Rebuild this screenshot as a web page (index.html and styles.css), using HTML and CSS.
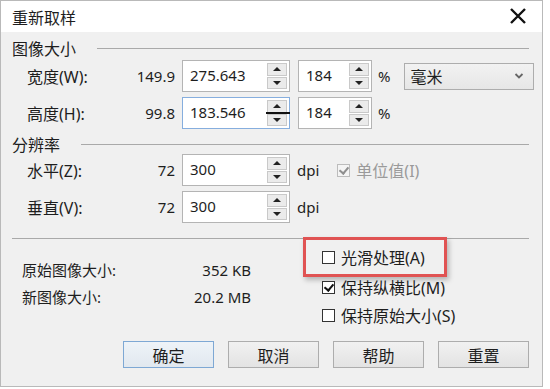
FILE: index.html
```html
<!DOCTYPE html>
<html lang="zh-CN">
<head>
    <meta charset="UTF-8">
    <title>重新取样</title>
    <link rel="stylesheet" href="styles.css">
</head>
<body>
    <div class="dialog">
        <div class="titlebar">
            <span class="title">重新取样</span>
            <svg class="close" width="20" height="20" viewBox="0 0 20 20">
                <path d="M3 3 L17 17 M17 3 L3 17" stroke="#111" stroke-width="2.4" fill="none"/>
            </svg>
        </div>

        <div class="content">
            <div class="group-head"><span>图像大小</span><i class="rule"></i></div>

            <div class="row">
                <span class="label">宽度(W):</span>
                <span class="orig">149.9</span>
                <div class="field wide">
                    <span class="val">275.643</span>
                    <span class="spin"><b class="up"></b><b class="down"></b></span>
                </div>
                <div class="field pct">
                    <span class="val">184</span>
                    <span class="spin"><b class="up"></b><b class="down"></b></span>
                </div>
                <span class="unit">%</span>
                <div class="select">
                    <span>毫米</span>
                    <svg width="10" height="8" viewBox="0 0 10 8"><path d="M1.5 2 L5 5.5 L8.5 2" stroke="#666" stroke-width="1.8" fill="none"/></svg>
                </div>
            </div>

            <div class="row">
                <span class="label">高度(H):</span>
                <span class="orig">99.8</span>
                <div class="field wide focused">
                    <span class="val">183.546</span>
                    <span class="spin"><b class="up"></b><b class="down"></b></span>
                    <i class="cursor-bar"></i>
                </div>
                <div class="field pct">
                    <span class="val">184</span>
                    <span class="spin"><b class="up"></b><b class="down"></b></span>
                </div>
                <span class="unit">%</span>
            </div>

            <div class="group-head second"><span>分辨率</span><i class="rule"></i></div>

            <div class="row">
                <span class="label">水平(Z):</span>
                <span class="orig">72</span>
                <div class="field wide">
                    <span class="val">300</span>
                    <span class="spin"><b class="up"></b><b class="down"></b></span>
                </div>
                <span class="dpi">dpi</span>
                <label class="check disabled">
                    <span class="box checked"></span>单位值(I)
                </label>
            </div>

            <div class="row">
                <span class="label">垂直(V):</span>
                <span class="orig">72</span>
                <div class="field wide">
                    <span class="val">300</span>
                    <span class="spin"><b class="up"></b><b class="down"></b></span>
                </div>
                <span class="dpi">dpi</span>
            </div>

            <div class="separator"></div>

            <div class="lower">
                <div class="info">
                    <div class="info-row"><span>原始图像大小:</span><span>352 KB</span></div>
                    <div class="info-row"><span>新图像大小:</span><span>20.2 MB</span></div>
                </div>
                <div class="checks">
                    <div class="highlight">
                        <label class="check"><span class="box"></span>光滑处理(A)</label>
                    </div>
                    <label class="check item"><span class="box checked"></span>保持纵横比(M)</label>
                    <label class="check item"><span class="box"></span>保持原始大小(S)</label>
                </div>
            </div>

            <div class="buttons">
                <button class="default">确定</button>
                <button>取消</button>
                <button>帮助</button>
                <button>重置</button>
            </div>
        </div>
    </div>
</body>
</html>
```

FILE: styles.css
```css
body {
    margin: 0;
    background-color: #ffffff;
    font-family: "Noto Sans", "Noto Sans CJK SC", sans-serif;
    font-size: 15px;
    color: #1e1e1e;
}
.dialog {
    width: 543px;
    height: 387px;
    box-sizing: border-box;
    border: 1px solid #b9b9b9;
    display: flex;
    flex-direction: column;
}
.titlebar {
    height: 31px;
    background-color: #ffffff;
    display: flex;
    align-items: center;
    justify-content: space-between;
    padding: 0 14px 0 11px;
}
.title {
    font-size: 16px;
}
.close {
    margin-top: -2px;
}
.content {
    flex: 1;
    background-color: #f0f0f0;
    padding: 0 13px 0 11px;
}
.group-head {
    display: flex;
    align-items: center;
    height: 20px;
    margin-top: 6px;
    margin-bottom: 2px;
    font-size: 16px;
}
.group-head.second {
    margin-top: 5px;
    margin-bottom: 0;
}
.rule {
    flex: 1;
    height: 1px;
    background-color: #a9a9a9;
    margin-left: 21px;
}
.row {
    display: flex;
    align-items: center;
    height: 32px;
    margin-bottom: 5px;
}
.row > * {
    flex-shrink: 0;
}
.label {
    width: 80px;
    padding-left: 15px;
    font-size: 16px;
}
.orig {
    width: 68px;
    text-align: right;
    margin-right: 7px;
}
.field {
    position: relative;
    height: 32px;
    box-sizing: border-box;
    border: 1px solid #b4b4b4;
    background-color: #ffffff;
    display: flex;
    align-items: center;
    padding: 2px 2px 2px 7px;
}
.field.wide {
    width: 108px;
}
.field.pct {
    width: 74px;
    margin-left: 8px;
}
.field.focused {
    border-color: #86aede;
}
.val {
    flex: 1;
    padding-bottom: 3px;
}
.spin {
    width: 20px;
    height: 100%;
    display: flex;
    flex-direction: column;
    gap: 1px;
}
.spin b {
    flex: 1;
    border: 1px solid #c9c9c9;
    background-color: #ebebeb;
    display: flex;
    align-items: center;
    justify-content: center;
}
.spin b::after {
    content: "";
    border-left: 4px solid transparent;
    border-right: 4px solid transparent;
}
.spin .up::after {
    border-bottom: 4px solid #222;
}
.spin .down::after {
    border-top: 4px solid #222;
}
.cursor-bar {
    position: absolute;
    right: -1px;
    top: 14px;
    width: 24px;
    height: 2px;
    background-color: #111;
}
.unit {
    margin-left: 6px;
    margin-right: 14px;
}
.select {
    width: 130px;
    height: 27px;
    box-sizing: border-box;
    border: 1px solid #adadad;
    background: linear-gradient(#f2f2f2, #e6e6e6);
    display: flex;
    align-items: center;
    justify-content: space-between;
    padding: 0 9px 0 5px;
    font-size: 16px;
}
.dpi {
    margin-left: 7px;
    margin-right: 18px;
    font-size: 15px;
}
.check {
    display: flex;
    align-items: center;
    font-size: 16px;
}
.check.disabled {
    color: #9a9a9a;
}
.box {
    width: 13px;
    height: 13px;
    box-sizing: border-box;
    border: 1px solid #333;
    background-color: #ffffff;
    margin-right: 6px;
    position: relative;
}
.check.disabled .box {
    border-color: #bcbcbc;
    background-color: #f4f4f4;
}
.box.checked::after {
    content: "";
    position: absolute;
    left: 3px;
    top: 0px;
    width: 4px;
    height: 7px;
    border-right: 2px solid #111;
    border-bottom: 2px solid #111;
    transform: rotate(40deg);
}
.check.disabled .box.checked::after {
    border-color: #8f8f8f;
}
.separator {
    height: 1px;
    background-color: #a9a9a9;
    margin-top: 15px;
}
.lower {
    display: flex;
}
.info {
    width: 229px;
    padding-left: 10px;
    padding-top: 17px;
    margin-right: 52px;
}
.info-row {
    display: flex;
    justify-content: space-between;
    align-items: center;
    height: 27px;
}
.checks {
    display: flex;
    flex-direction: column;
}
.highlight {
    width: 144px;
    height: 40px;
    margin-top: -2px;
    box-sizing: border-box;
    border: 3px solid #e05353;
    padding-left: 16px;
    display: flex;
    align-items: center;
    box-shadow: 2px 3px 5px rgba(0, 0, 0, 0.25);
}
.check.item {
    height: 20px;
    margin-top: 8px;
    padding-left: 19px;
}
.highlight + .check.item {
    margin-top: 0;
}
.buttons {
    display: flex;
    justify-content: flex-end;
    gap: 14px;
    margin-top: 16px;
}
button {
    width: 91px;
    height: 27px;
    border: 1px solid #adadad;
    background: linear-gradient(#f1f1f1, #e3e3e3);
    font-family: "Noto Sans CJK SC", sans-serif;
    font-size: 16px;
    color: #1e1e1e;
    padding: 0;
}
button.default {
    border-color: #7ea8d4;
    background: linear-gradient(#eef3f8, #e1e8ef);
}
```
